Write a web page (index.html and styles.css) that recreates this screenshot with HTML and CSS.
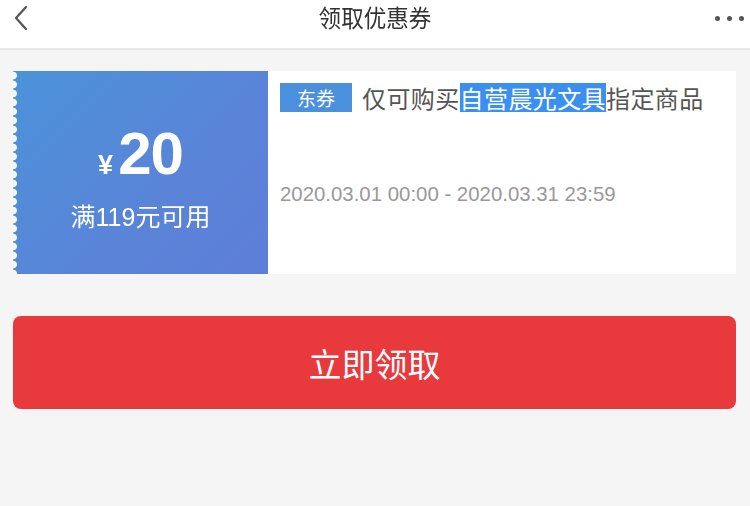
FILE: index.html
```html
<!DOCTYPE html>
<html lang="zh">
<head>
<meta charset="utf-8">
<title>领取优惠券</title>
<link rel="stylesheet" href="styles.css">
</head>
<body>
<header class="topbar">
  <svg class="back" width="16" height="26" viewBox="0 0 16 26"><path d="M13 2 L3 13 L13 24" fill="none" stroke="#555" stroke-width="2.2" stroke-linecap="round" stroke-linejoin="round"/></svg>
  <h1 class="title">领取优惠券</h1>
  <div class="more"><span></span><span></span><span></span></div>
</header>
<main class="content">
  <section class="coupon">
    <div class="coupon-left">
      <div class="amount"><span class="yen">¥</span><span class="num">20</span></div>
      <div class="cond">满119元可用</div>
    </div>
    <div class="coupon-right">
      <div class="desc"><span class="tag">东券</span><span class="txt">仅可购买<span class="hl">自营晨光文具</span>指定商品</span></div>
      <div class="date">2020.03.01 00:00 - 2020.03.31 23:59</div>
    </div>
  </section>
  <button class="get">立即领取</button>
</main>
</body>
</html>
```

FILE: styles.css
```css
html, body {
  margin: 0;
  padding: 0;
}
body {
  width: 750px;
  height: 506px;
  overflow: hidden;
  background: #f5f5f5;
  font-family: "Liberation Sans", "Noto Sans CJK SC", sans-serif;
}
.topbar {
  height: 48px;
  background: #fff;
  border-bottom: 2px solid #e8e8e8;
  display: flex;
  align-items: center;
  justify-content: space-between;
  padding: 0 6px 0 13px;
  box-sizing: content-box;
  position: relative;
}
.back {
  display: block;
  margin-top: -12px;
}
.title {
  margin: 0;
  font-family: "Noto Sans CJK SC", sans-serif;
  font-weight: 400;
  font-size: 24px;
  color: #333;
  position: absolute;
  left: 0;
  right: 0;
  top: 1px;
  text-align: center;
  line-height: 32px;
  transform: scaleX(0.94);
}
.more {
  display: flex;
  gap: 7px;
  margin-top: -12px;
}
.more span {
  width: 5px;
  height: 5px;
  border-radius: 50%;
  background: #555;
}
.content {
  padding: 21px 14px 0 13px;
}
.coupon {
  height: 203px;
  display: flex;
}
.coupon-left {
  width: 255px;
  flex: none;
  background: linear-gradient(135deg, #4b92d9 0%, #5a84d8 60%, #5e7ed8 100%);
  color: #fff;
  display: flex;
  flex-direction: column;
  align-items: center;
  justify-content: center;
  -webkit-mask-image: radial-gradient(circle at 0 4.5px, transparent 3.6px, #000 4.3px);
  -webkit-mask-size: 100% 9px;
  mask-image: radial-gradient(circle at 0 4.5px, transparent 3.6px, #000 4.3px);
  mask-size: 100% 9px;
}
.amount {
  display: flex;
  align-items: baseline;
  line-height: 1;
  margin-top: 8px;
}
.yen {
  font-size: 27px;
  margin-right: 5px;
  font-weight: 700;
}
.num {
  font-size: 60px;
  font-weight: 700;
  letter-spacing: -1px;
}
.cond {
  font-size: 25px;
  margin-top: 21px;
  line-height: 1;
}
.coupon-right {
  flex: 1;
  background: #fff;
  padding: 12px 12px 0 12px;
}
.desc {
  display: flex;
  align-items: center;
  height: 29px;
}
.tag {
  width: 72px;
  height: 29px;
  background: #4b90dc;
  color: #fff;
  font-size: 19px;
  line-height: 29px;
  text-align: center;
  font-family: "Noto Sans CJK SC", sans-serif;
  margin-right: 10px;
}
.txt {
  font-family: "Noto Sans CJK SC", sans-serif;
  font-size: 24px;
  line-height: 29px;
  color: #555;
  letter-spacing: 0.4px;
}
.hl {
  background: #3a8ff0;
  color: #fff;
  display: inline-block;
  height: 29px;
}
.date {
  margin-top: 70px;
  font-size: 20.4px;
  color: #999;
  line-height: 24px;
}
.get {
  display: block;
  width: 100%;
  height: 93px;
  margin-top: 42px;
  border: none;
  border-radius: 8px;
  background: #e8393d;
  color: #fff;
  font-family: "Noto Sans CJK SC", sans-serif;
  font-size: 33px;
  padding: 0;
}
```
